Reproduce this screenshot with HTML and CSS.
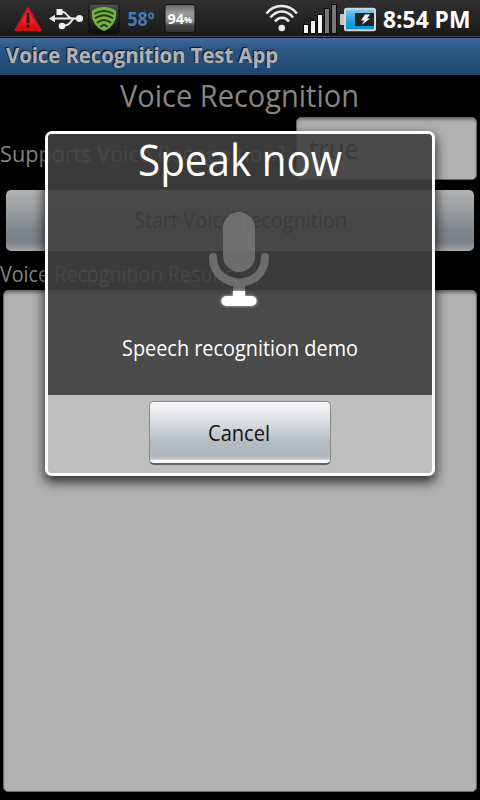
FILE: index.html
```html
<!DOCTYPE html>
<html lang="en">
<head>
<meta charset="utf-8">
<title>Voice Recognition Test App</title>
<link rel="stylesheet" href="styles.css">
</head>
<body>
<div class="screen">
  <header class="status">
    <svg class="status-icons" width="200" height="37" viewBox="0 0 200 37">
      <defs>
        <linearGradient id="red" x1="0" y1="0" x2="0" y2="1"><stop offset="0" stop-color="#ff4a48"/><stop offset="1" stop-color="#c9090c"/></linearGradient>
        <linearGradient id="tile" x1="0" y1="0" x2="0" y2="1"><stop offset="0" stop-color="#505050"/><stop offset=".5" stop-color="#2c2c2c"/><stop offset="1" stop-color="#090909"/></linearGradient>
        <linearGradient id="silver" x1="0" y1="0" x2="0" y2="1"><stop offset="0" stop-color="#626262"/><stop offset=".3" stop-color="#999"/><stop offset=".6" stop-color="#888"/><stop offset=".75" stop-color="#484848"/><stop offset="1" stop-color="#303030"/></linearGradient>
      </defs>
      <path d="M28 8L40.500 30H15.500Z" fill="url(#red)" stroke="#d01517" stroke-width="2" stroke-linejoin="round"/>
      <path d="M28 14V22M28 25.800V26.600" stroke="#351010" stroke-width="2.800" stroke-linecap="round"/>
      <g fill="none" stroke="#eee" stroke-width="1.800"><path d="M53 18.500H77M60 12H63C67 12 67 18.500 73 18.500M62 26C72 26 71 19 74 18.500"/></g>
      <g fill="#eee"><path d="M49 18.500L55 14.800V22.200Z"/><rect x="56.500" y="9" width="6" height="6"/><circle cx="79.500" cy="18.500" r="3.600"/><circle cx="62" cy="26" r="3.300"/></g>
      <rect x="89" y="4" width="30" height="30" rx="1" fill="url(#tile)" stroke="#111"/>
      <path d="M104 7Q111 7 116 11Q117.500 25 104 31Q90.500 25 92 11Q97 7 104 7Z" fill="#6fb53f"/>
      <g fill="none" stroke="#28361c" stroke-width="1.900" stroke-linecap="round"><path d="M95 13.500Q104 8.500 113 13.500M95.500 18Q104 12.500 112.500 18M97.500 22.500Q104 17.500 110.500 22.500M101 26.500Q104 23.500 107 26.500"/></g>
      <text x="127.500" y="25.500" class="temp" textLength="27" lengthAdjust="spacingAndGlyphs">58º</text>
      <rect x="165" y="4.500" width="30" height="28" rx="2" fill="url(#silver)" stroke="#111"/>
      <text x="167.500" y="24" class="pct" textLength="16.500" lengthAdjust="spacingAndGlyphs">94</text>
      <text x="184" y="23" class="pct-sign" textLength="8" lengthAdjust="spacingAndGlyphs">%</text>
    </svg>
    <svg class="status-right" width="220" height="37" viewBox="260 0 220 37">
      <defs>
        <linearGradient id="blue" x1="0" y1="0" x2="0" y2="1"><stop offset="0" stop-color="#86cdf0"/><stop offset=".6" stop-color="#18a0dc"/><stop offset="1" stop-color="#0591d2"/></linearGradient>
      </defs>
      <g fill="none" stroke="#e9e9e9" stroke-width="2.500"><path d="M266.500 13.500C274 3.500 289 3.500 297 13.500M270.500 17.500C277 9.500 287 9.500 293 17.500M275 21.500C279 16.500 285 16.500 289 21.500"/></g>
      <circle cx="281.800" cy="28" r="3.300" fill="#e9e9e9"/>
      <g stroke="#0b0b0b"><rect x="303.500" y="24.500" width="5" height="9" fill="#f4f4f4"/><rect x="310.500" y="20.500" width="5" height="13" fill="#f4f4f4"/><rect x="317.500" y="14.500" width="5" height="19" fill="#f4f4f4"/><rect x="324.500" y="8.500" width="5" height="25" fill="#777"/><rect x="331.500" y="4.500" width="5" height="29" fill="#777"/></g>
      <rect x="340" y="14" width="5" height="11" rx="1" fill="#c9c9c9"/>
      <rect x="345" y="8.800" width="30" height="21.500" rx="1.500" fill="url(#blue)" stroke="#d5d5d5" stroke-width="2"/>
      <rect x="355" y="13" width="19" height="13" rx="1" fill="#222"/>
      <path d="M365 14.500H370L367 18.500H370L361.500 25L364.500 20.500H361Z" fill="#fff"/>
      <text x="383" y="27.500" class="clock" textLength="87.500" lengthAdjust="spacingAndGlyphs">8:54 PM</text>
    </svg>
  </header>
  <div class="titlebar"><svg width="290" height="37"><text x="6" y="27" class="app-shadow" textLength="272" lengthAdjust="spacingAndGlyphs">Voice Recognition Test App</text></svg></div>
  <main class="app">
    <h1 class="heading"><svg width="242" height="42"><text x="1" y="31.500" textLength="239" lengthAdjust="spacingAndGlyphs">Voice Recognition</text></svg></h1>
    <div class="row">
      <svg class="label" width="296" height="40"><text x="0" y="28" textLength="291" lengthAdjust="spacingAndGlyphs">Supports Voice Recognition?:</text></svg>
      <div class="field"><svg width="60" height="40"><text x="0" y="28" textLength="50" lengthAdjust="spacingAndGlyphs">true</text></svg></div>
    </div>
    <div class="start"><svg width="214" height="36"><text x="1" y="25" textLength="213" lengthAdjust="spacingAndGlyphs">Start Voice Recognition</text></svg></div>
    <svg class="label results-label" width="300" height="38"><text x="0" y="31" textLength="239" lengthAdjust="spacingAndGlyphs">Voice Recognition Results:</text></svg>
    <div class="results"></div>
  </main>
  <div class="dialog">
    <div class="body">
      <svg class="speak" width="206" height="58"><text x="1" y="42" textLength="204" lengthAdjust="spacingAndGlyphs">Speak now</text></svg>
      <svg class="mic" width="84" height="112" viewBox="197 204 84 112">
        <defs><filter id="glow" x="-50%" y="-80%" width="200%" height="260%"><feGaussianBlur stdDeviation="1.6"/></filter></defs>
        <g opacity=".7"><rect x="223" y="212" width="32" height="60" rx="16" fill="#828282"/>
        <path d="M213 257C213 291 265 291 265 257" fill="none" stroke="#828282" stroke-width="8" stroke-linecap="round"/>
        <path d="M233 283H245V291H233Z" fill="#828282"/></g>
        <g fill="#fff" opacity=".7" filter="url(#glow)"><rect x="233" y="291" width="12" height="9"/><rect x="221" y="296" width="36" height="10" rx="5"/></g>
        <g fill="#fff"><rect x="233" y="291" width="12" height="9"/><rect x="221.500" y="296" width="35" height="10" rx="5"/></g>
      </svg>
      <svg class="prompt" width="238" height="38"><text x="1" y="25" textLength="236" lengthAdjust="spacingAndGlyphs">Speech recognition demo</text></svg>
    </div>
    <div class="footer"><button class="cancel"><svg width="64" height="34"><text x="1" y="25" textLength="62" lengthAdjust="spacingAndGlyphs">Cancel</text></svg></button></div>
  </div>
</div>
</body>
</html>
```
FILE: styles.css
```css
* { box-sizing: border-box; }
body { margin: 0; background: #000; font-family: "Open Sans", "Noto Sans", sans-serif; }
svg { display: block; overflow: visible; }
.screen { position: relative; width: 480px; height: 800px; overflow: hidden; background: #000; display: flex; flex-direction: column; }
.status { height: 38px; display: flex; justify-content: space-between; background: linear-gradient(#303030, #1b1b1b 34px, #171717 36px, #555 36px, #444 37px, #000 37px); }
.temp { font-size: 19px; font-weight: 700; fill: #427eb5; }
.pct { font-size: 14.500px; font-weight: 700; fill: #fff; }
.pct-sign { font-size: 9px; font-weight: 700; fill: #fff; }
.clock { font-size: 23px; font-weight: 700; fill: #fff; }
.titlebar { height: 37px; background: linear-gradient(#3e6b9a, #2c5885 10px, #20476f); border-bottom: 1px solid #1f4263; }
.titlebar svg { margin-top: -2px; }
.app-shadow { font-size: 22px; font-weight: 700; fill: #b2b2b2; text-shadow: -1px -1px 1px #111; }
.app { display: flex; flex-direction: column; height: 725px; }
.heading { margin: 0; height: 42px; display: flex; justify-content: center; font-size: 31.500px; font-weight: 400; fill: #858585; }
.row { height: 63px; display: flex; align-items: center; }
.label { font-size: 22.500px; fill: #858585; flex: none; }
.row .label { margin-top: 10px; }
.field { width: 181px; height: 63px; border-radius: 5px; background: #b1b1b1; border: 1px solid #66666f; box-shadow: inset 0 3px 3px -1px #777; padding: 13px 0 0 12px; font-size: 27.500px; fill: #111; }
.start { height: 61px; margin: 10px 6px 0; border-radius: 5px; display: flex; justify-content: center; align-items: center; font-size: 22.500px; fill: #111; background: linear-gradient(#b2b2b2, #999d9f 35%, #7f858a 66%, #7c8187 85%, #979a9c 96%, #aaa); }
.results-label { height: 38px; }
.results { height: 502px; margin: 1px 3px 0 3px; border: 1px solid #666b72; border-radius: 5px; background: #b1b1b1; box-shadow: inset 0 3px 3px -1px #777; }
.dialog { position: absolute; left: 45px; top: 131px; width: 390px; height: 345px; border: 3px solid #fff; border-radius: 7px; box-shadow: 0 5px 12px 1px rgba(0,0,0,.75); display: flex; flex-direction: column; overflow: hidden; }
.body { height: 261px; background: rgba(64,64,64,.91); display: flex; flex-direction: column; align-items: center; fill: #fff; }
.speak { font-size: 43px; }
.mic { margin: 12px 2px 0 0; }
.prompt { margin-top: 15px; font-size: 22.500px; }
.body svg { flex: none; }
.footer { flex: 1; display: flex; justify-content: center; align-items: flex-start; padding-top: 6px; background: #bfbfbf; }
.cancel { width: 182px; height: 64px; padding: 0 3px 0 0; border: 1px solid #888; border-bottom: 2px solid #666; border-radius: 5px; background: linear-gradient(#f7f8fa, #dfe2e5 28%, #b5bbc2 66%, #b1b6bd 88%, #c3c7cb 94%, #fff 96%, #eee); display: flex; justify-content: center; align-items: center; font-family: inherit; font-size: 22.500px; fill: #111; }
```
